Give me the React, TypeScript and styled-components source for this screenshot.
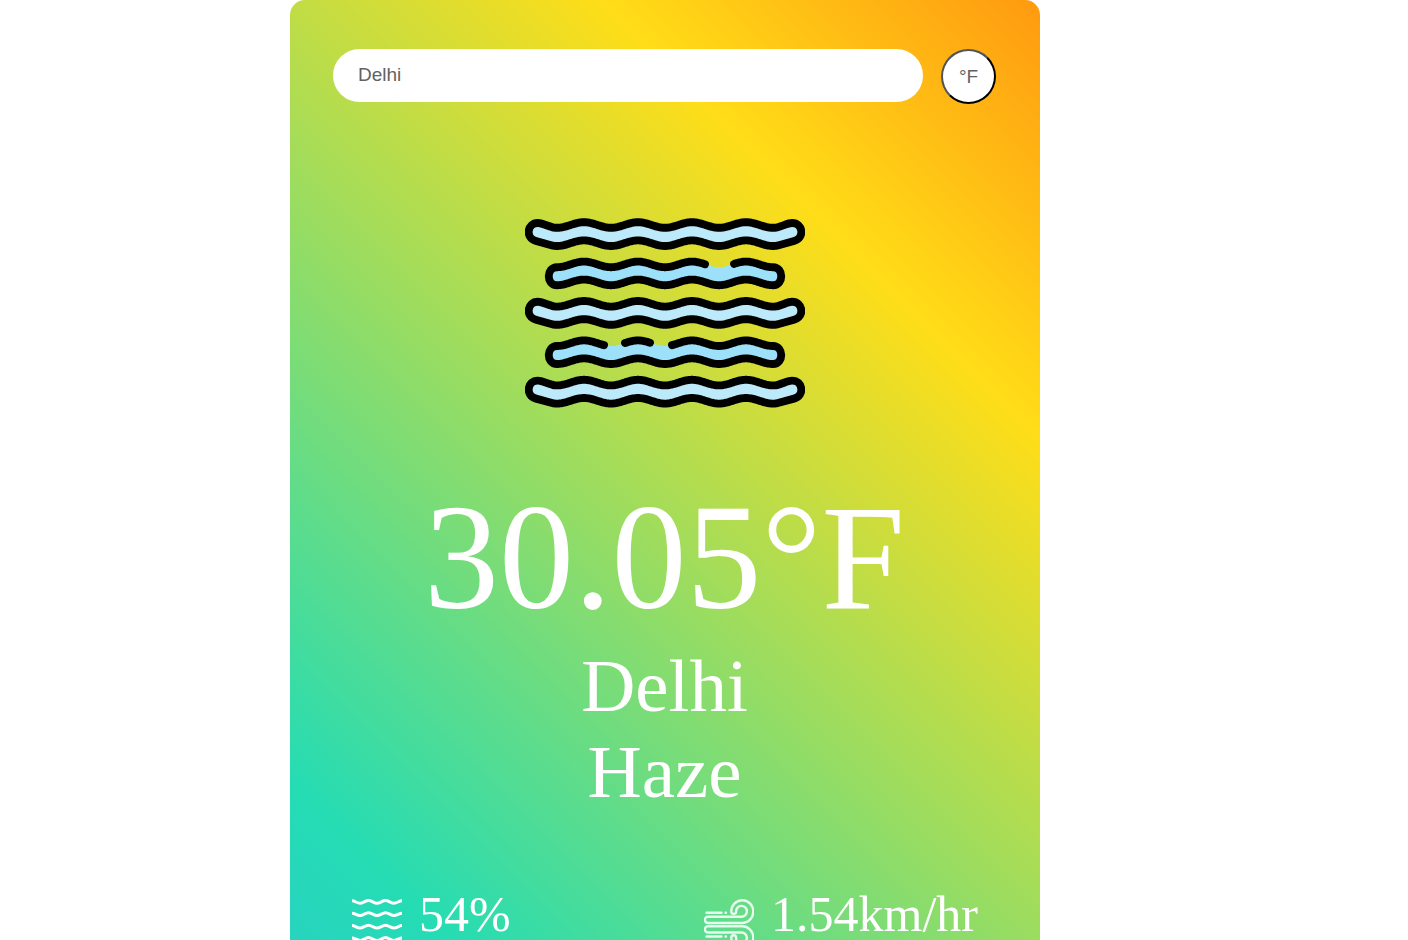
import React from "react";
import styled, { createGlobalStyle } from "styled-components";

const GlobalStyle = createGlobalStyle`
  * { box-sizing: border-box; }
  body { margin: 0; background: #fff; }
`;

const Page = styled.main`
  display: flex;
  justify-content: center;
  height: 100vh;
  padding-right: 78px;
  overflow: hidden;
`;

const Card = styled.section`
  display: flex;
  flex-direction: column;
  align-items: center;
  flex: 0 1 750px;
  height: max-content;
  padding: 49px 44px 84px 43px;
  border-radius: 15px;
  background: linear-gradient(45deg, #29cfc6 0%, #25dcb4 14%, #ffdd18 75.5%, #ff9a10 100%);
  color: #fff;
  font-family: "Liberation Serif", serif;
`;

const SearchBar = styled.form`
  display: flex;
  align-items: flex-start;
  gap: 18px;
  width: 100%;
`;

const CityInput = styled.input`
  flex: 1;
  min-width: 0;
  height: 53px;
  padding: 0 25px 2px;
  border: 0;
  border-radius: 40px;
  background: #fff;
  color: #626262;
  font: 19px "Liberation Sans", sans-serif;
`;

const UnitButton = styled.button`
  width: 55px;
  height: 55px;
  padding: 0;
  border: 2px outset #000;
  border-radius: 50%;
  background: #fff;
  color: #626262;
  font: 19px "Liberation Sans", sans-serif;
`;

const HazeSvg = styled.svg`
  width: 280px;
  height: 280px;
  margin-top: 69px;
`;

const Temperature = styled.h1`
  margin: 18px 0 0;
  font-size: 150px;
  font-weight: 400;
  line-height: 172px;
`;

const Place = styled.p`
  margin: 0;
  font-size: 75px;
  line-height: 86px;
`;

const Details = styled.div`
  display: flex;
  justify-content: space-between;
  width: 100%;
  margin-top: 74px;
  padding: 0 18px 0 19px;
`;

const Detail = styled.div`
  display: flex;
  align-items: flex-start;
  gap: 17px;
  font-size: 50px;
  line-height: 50px;
`;

const DetailSvg = styled.svg`
  width: 50px;
  height: 50px;
  margin-top: 10px;
`;

/* Points of a wave whose crests are 54 apart, with one at x = 59. */
const wave = (from: number, to: number, y: number) => {
  const points: string[] = [];
  const step = from < to ? 1 : -1;
  for (let x = from; x !== to + step; x += step) {
    points.push(`${x} ${(y - 2.8 * Math.cos(((x - 59) * Math.PI) / 27)).toFixed(2)}`);
  }
  return points.join(" L");
};

const longBand = (y: number) =>
  `M${wave(28, 252, y)} C258 ${y + 1} 263 ${y - 2} 267 ${y - 2} C278 ${y - 2} 280 ${y + 13} 269 ${y + 16} L${wave(252, 28, y + 18.2)} L11 ${y + 16} C0 ${y + 13} 2 ${y - 2} 13 ${y - 2} C17 ${y - 2} 22 ${y + 1} 28 ${y + 2.3}Z`;

const shortEnds = (y: number) =>
  `L${wave(248, 32, y + 18)} C21 ${y + 20.8} 21 ${y + 3} 32 ${y + 2.8}`;

const shortBand = (y: number) =>
  `M${wave(32, 248, y)} C259 ${y + 3} 259 ${y + 20.8} 248 ${y + 20.8} ${shortEnds(y)}Z`;

const shortOutline = (y: number, gaps: [number, number][]) => {
  const starts = gaps.map((gap) => gap[1]);
  const middle = gaps.slice(1).map((gap, i) => `M${wave(starts[i], gap[0], y)}`);
  return [
    ...middle,
    `M${wave(starts[starts.length - 1], 248, y)} C259 ${y + 3} 259 ${y + 20.8} 248 ${y + 20.8}`,
    `${shortEnds(y)} L${wave(32, gaps[0][0], y)}`,
  ].join(" ");
};

const Haze = () => (
  <HazeSvg viewBox="0 0 280 280" role="img" aria-label="Haze" stroke="#000" strokeWidth="7.9" strokeLinecap="round" strokeLinejoin="round">
    {[52, 130.8, 209.6].map((y) => (
      <path key={y} d={longBand(y)} fill="#bdeafb" />
    ))}
    <g stroke="none" fill="#9ce1f9">
      <path d={shortBand(91.4)} />
      <path d={shortBand(170.2)} />
    </g>
    <g fill="none">
      <path d={shortOutline(91.4, [[180, 209]])} />
      <path d={shortOutline(170.2, [[79, 100], [125, 147]])} />
    </g>
  </HazeSvg>
);

const Humidity = () => (
  <DetailSvg viewBox="0 0 50 50" fill="none" stroke="#fff" strokeWidth="3" aria-hidden="true">
    {[2.8, 15.2, 27.6, 40].map((y) => (
      <path key={y} d={`M0 ${y - 1} C3 ${y - 1} 5 ${y + 1.4} 8 ${y + 1.4} S13.5 ${y - 1.4} 16.5 ${y - 1.4} S22 ${y + 1.4} 25 ${y + 1.4} S30.5 ${y - 1.4} 33.5 ${y - 1.4} S39 ${y + 1.4} 42 ${y + 1.4} S47 ${y - 1} 50 ${y - 1}`} />
    ))}
  </DetailSvg>
);

const gust =
  "M2.5 13.7H17.5M21.5 13.7H22M38 24H4A3.15 3.15 0 0 1 4 17.7H37.5A5.4 5.4 0 1 0 32.1 12.5A2.4 2.4 0 0 1 27.3 12.5A11 11.4 0 1 1 38 24";

const Wind = () => (
  <DetailSvg viewBox="0 0 50 50" fill="none" stroke="#fff" strokeOpacity="0.85" strokeWidth="2.4" strokeLinecap="round" aria-hidden="true">
    <path d={gust} />
    <path d={gust} transform="translate(0 51.2) scale(1 -1)" />
  </DetailSvg>
);

export default function App() {
  return (
    <>
      <GlobalStyle />
      <Page>
        <Card>
          <SearchBar onSubmit={(event) => event.preventDefault()}>
            <CityInput type="text" aria-label="City" defaultValue="Delhi" />
            <UnitButton type="button">°F</UnitButton>
          </SearchBar>
          <Haze />
          <Temperature>30.05°F</Temperature>
          <Place>Delhi</Place>
          <Place>Haze</Place>
          <Details>
            <Detail>
              <Humidity />
              <span>54%</span>
            </Detail>
            <Detail>
              <Wind />
              <span>1.54km/hr</span>
            </Detail>
          </Details>
        </Card>
      </Page>
    </>
  );
}
